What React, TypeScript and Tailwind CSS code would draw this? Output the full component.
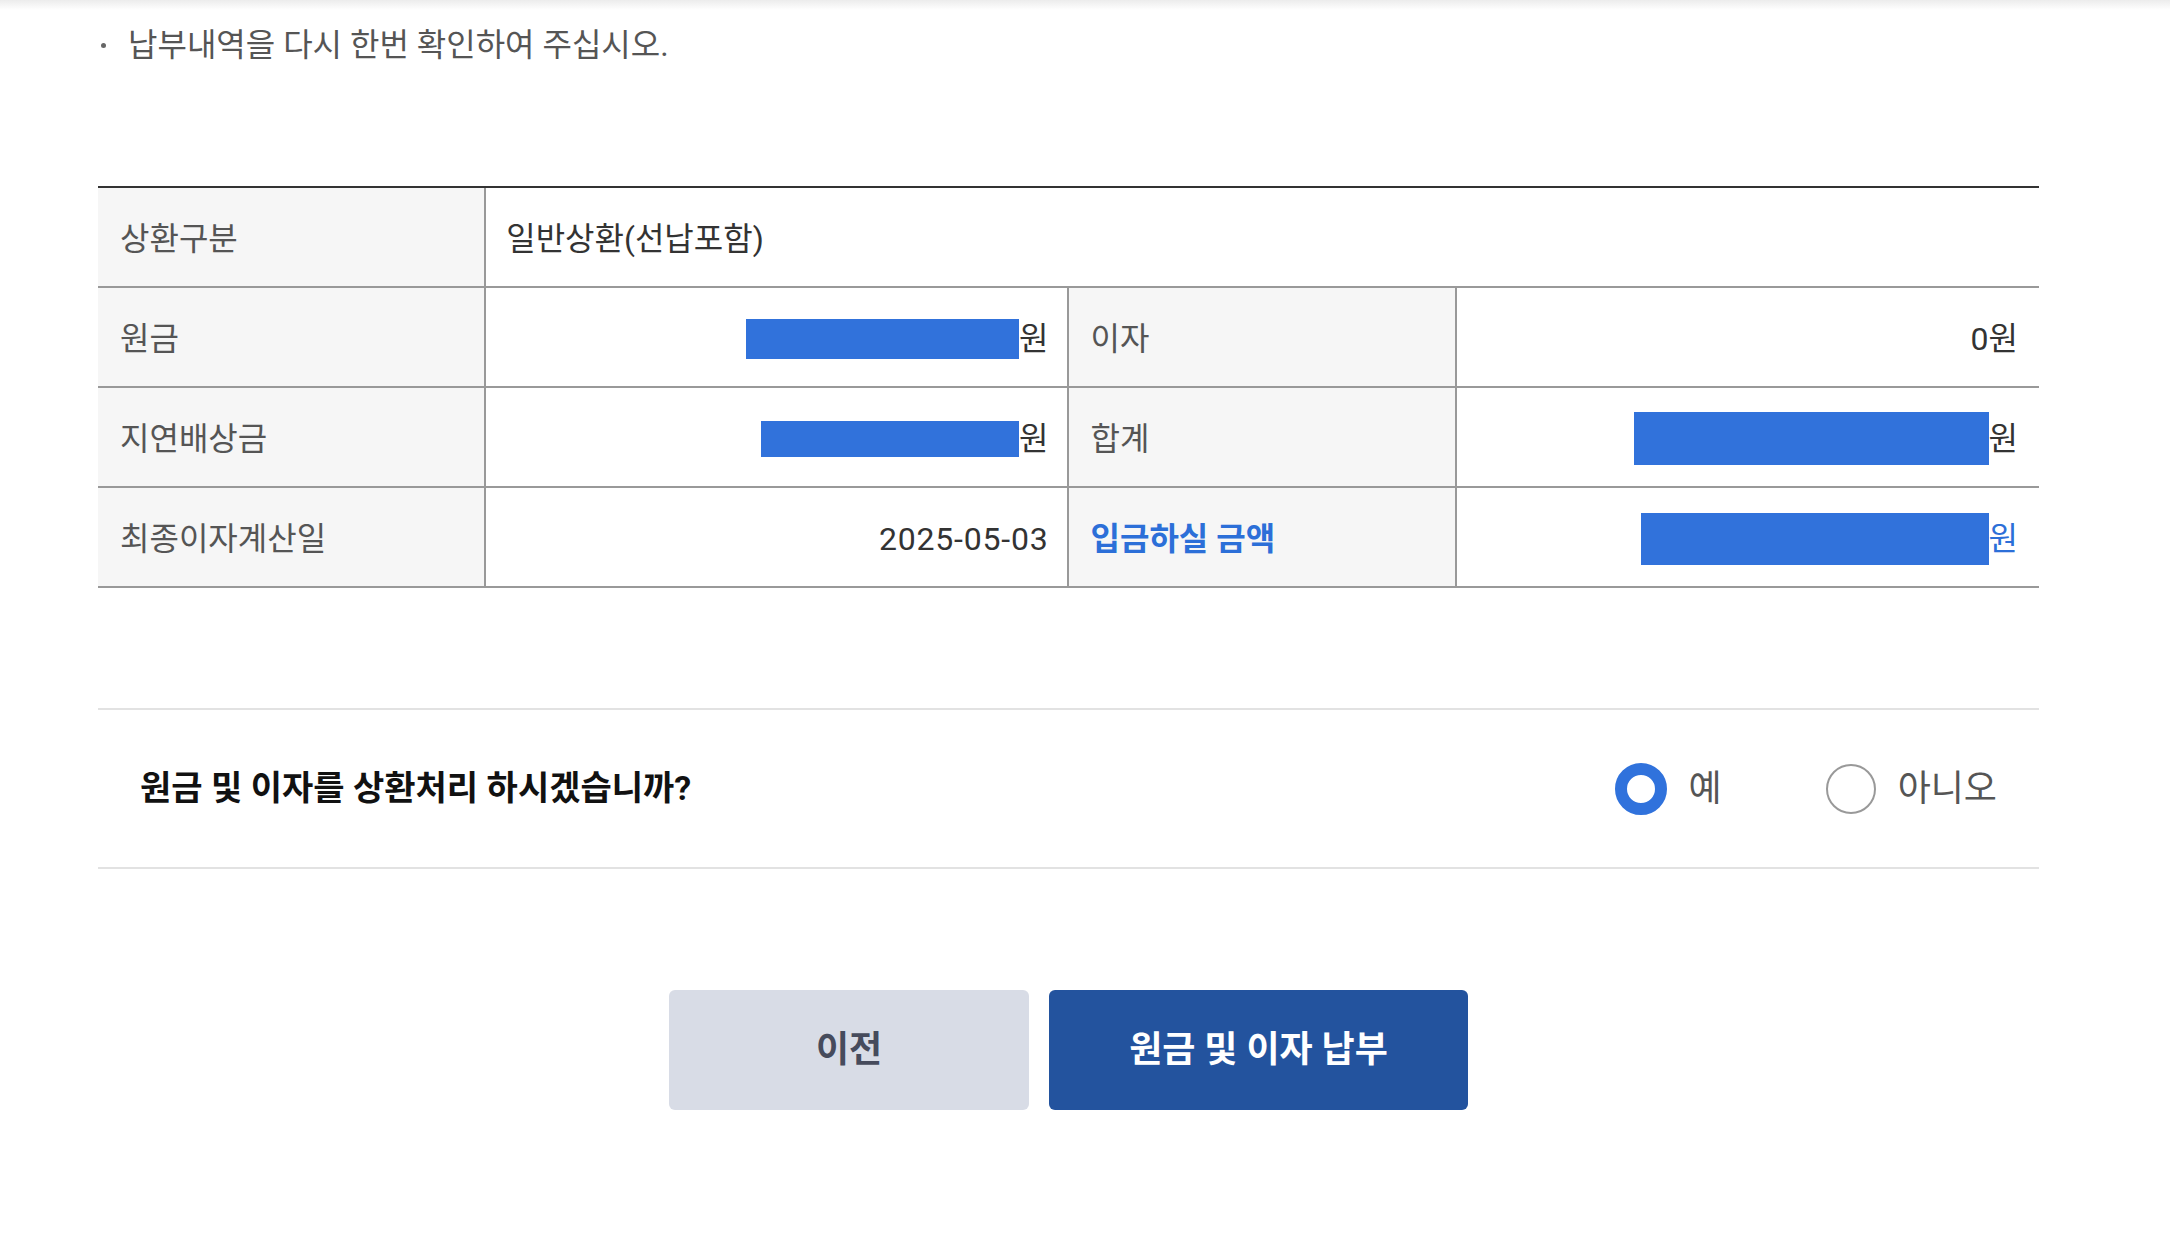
import React, { useState } from 'react'

const font = "font-['Roboto','Noto_Sans_CJK_KR',sans-serif]"

// 가려진 금액 자리 (파란 박스)
const Masked = ({ w, h }: { w: number; h: number }) => (
    <span className="inline-block bg-[#3172db]" style={{ width: w, height: h }} />
)

const Label = ({ children, blue }: { children: React.ReactNode; blue?: boolean }) => (
    <div
        className={`flex items-center bg-[#f6f6f6] pl-[22px] pt-[3px] border-r-2 border-b-2 border-[#999] ${
            blue ? 'text-[#2c6fd8] font-bold' : 'text-[#555]'
        }`}
    >
        {children}
    </div>
)

const Value = ({ children, last }: { children: React.ReactNode; last?: boolean }) => (
    <div
        className={`flex items-center justify-end pt-[3px] border-b-2 border-[#999] text-[#333] ${
            last ? 'pr-[21px]' : 'pr-[18px] border-r-2'
        }`}
    >
        {children}
    </div>
)

const Radio = ({ checked, label, onClick }: { checked: boolean; label: string; onClick: () => void }) => (
    <button onClick={onClick} className="flex items-center gap-[22px]">
        {checked ? (
            <span className="w-[52px] h-[52px] rounded-full border-[12px] border-[#3072dc] bg-white" />
        ) : (
            <span className="w-[50px] h-[50px] rounded-full border-2 border-[#999] bg-white" />
        )}
        <span className="text-[36px] text-[#555] leading-none">{label}</span>
    </button>
)

const App = () => {
    const [agree, setAgree] = useState(true) // 상환처리 여부

    return (
        <div className={`w-[2170px] min-h-[1252px] bg-white ${font}`}>
            <div className="h-[10px] bg-gradient-to-b from-[#ececec] to-white" />
            <div className="ml-[98px] w-[1941px]">
                {/* 안내 문구 */}
                <div className="flex items-center h-[44px] mt-[13px] text-[32px] text-[#555]">
                    <span className="w-[5px] h-[5px] rounded-full bg-[#666] ml-[3px] mr-[22px]" />
                    납부내역을 다시 한번 확인하여 주십시오.
                </div>

                {/* 상환 내역 표 */}
                <div className="mt-[119px] border-t-2 border-[#333] grid grid-cols-[20fr_30fr_20fr_30fr] auto-rows-[100px] text-[32px]">
                    <Label>상환구분</Label>
                    <div className="col-span-3 flex items-center pl-[20px] pt-[3px] border-b-2 border-[#999] text-[#333]">
                        일반상환(선납포함)
                    </div>

                    <Label>원금</Label>
                    <Value>
                        <Masked w={273} h={40} />원
                    </Value>
                    <Label>이자</Label>
                    <Value last>0원</Value>

                    <Label>지연배상금</Label>
                    <Value>
                        <Masked w={258} h={36} />원
                    </Value>
                    <Label>합계</Label>
                    <Value last>
                        <Masked w={355} h={53} />원
                    </Value>

                    <Label>최종이자계산일</Label>
                    <Value>
                        <span className="tracking-[0.8px]">2025-05-03</span>
                    </Value>
                    <Label blue>입금하실 금액</Label>
                    <Value last>
                        <Masked w={348} h={52} />
                        <span className="text-[#2c6fd8]">원</span>
                    </Value>
                </div>

                {/* 상환처리 확인 */}
                <div className="mt-[120px] h-[161px] border-y-2 border-[#e2e2e2] flex items-center justify-between pl-[42px] pr-[42px]">
                    <div className="text-[34px] font-bold text-[#111]">
                        원금 및 이자를 상환처리 하시겠습니까?
                    </div>
                    <div className="flex items-center gap-[104px]">
                        <Radio checked={agree} label="예" onClick={() => setAgree(true)} />
                        <Radio checked={!agree} label="아니오" onClick={() => setAgree(false)} />
                    </div>
                </div>

                {/* 버튼 */}
                <div className="mt-[121px] flex justify-center gap-[20px]">
                    <button className="w-[360px] h-[120px] rounded-[6px] bg-[#d8dce6] text-[#464b5c] text-[36px] font-bold">
                        이전
                    </button>
                    <button className="w-[419px] h-[120px] rounded-[6px] bg-[#23539e] text-white text-[36px] font-bold">
                        원금 및 이자 납부
                    </button>
                </div>
            </div>
        </div>
    )
}

export default App
